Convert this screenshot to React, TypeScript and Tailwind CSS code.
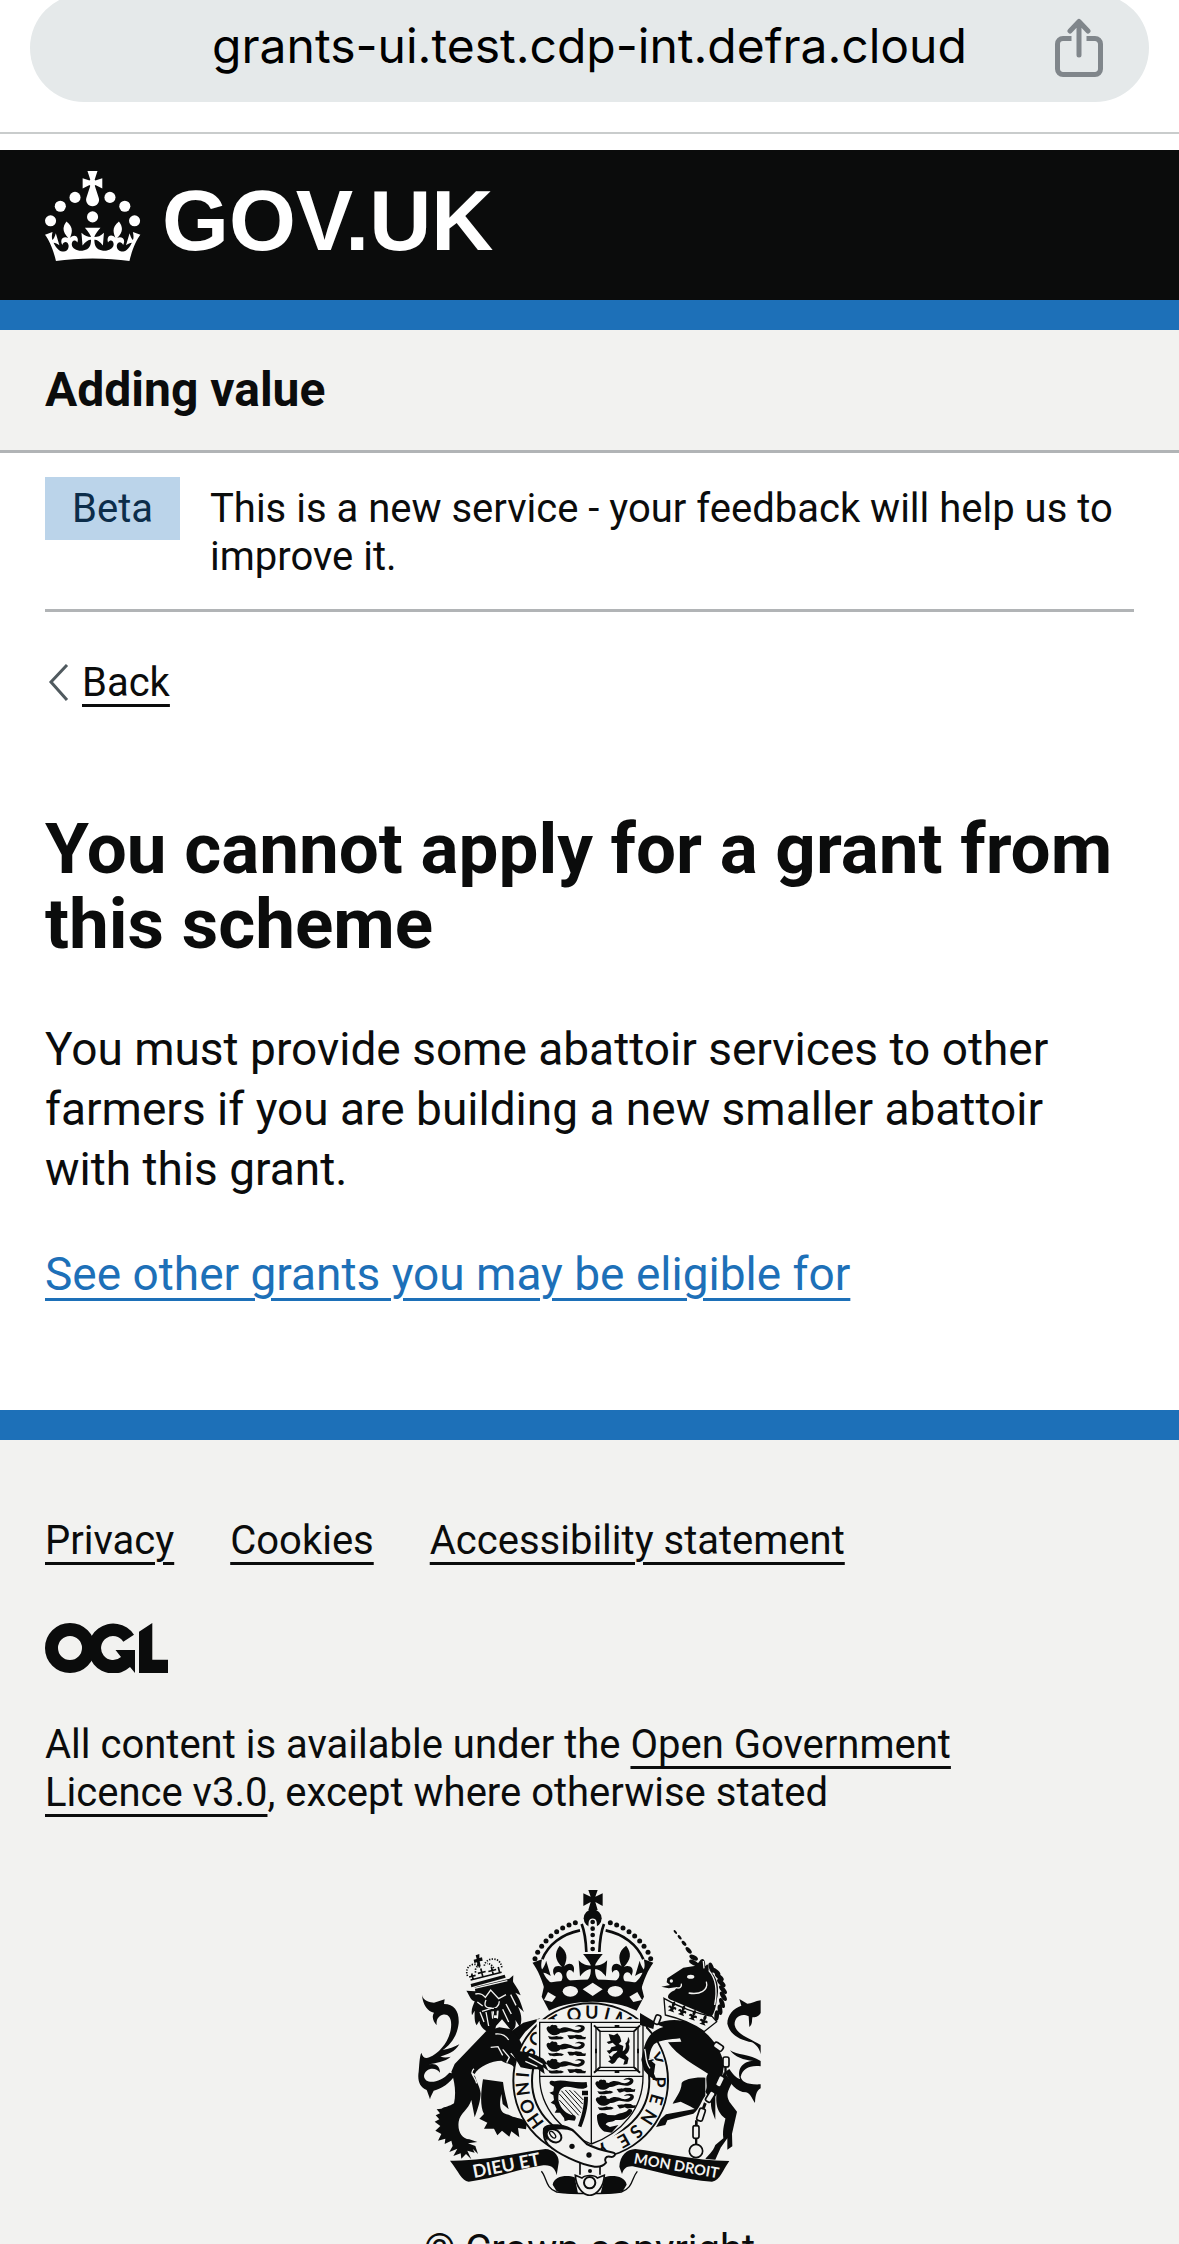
import React from "react";

const CROWN_BASE =
  "M37,37.9s-3.4,3.8-4.1,6.1c2.2,0,4.2-.5,6.4-2.8l-.7,8.5c-2-2.8-4.4-4.1-5.7-3.8.1,3.1.5,6.7,5.8,7.2,3.7.3,6.7-1.5,7-3.8.4-2.6-2-4.3-3.7-1.6-1.4-4.5,2.4-6.1,4.9-3.2-1.9-4.5-1.8-7.7,2.4-10.9,3,4,2.6,7.3-1.2,11.1,2.4-1.3,6.2,0,4,4.6-1.2-2.8-3.7-2.2-4.2.2-.3,1.7.7,3.7,3,4.2,1.9.3,4.7-.9,7-5.9-1.3,0-2.4.7-3.9,1.7l2.4-8c.6,2.3,1.4,3.7,2.2,4.5.6-1.6.5-2.8,0-5.3l5,1.8c-2.6,3.6-5.2,8.7-7.3,17.5-7.4-1.1-15.7-1.7-24.5-1.7h0c-8.8,0-17.1.6-24.5,1.7-2.1-8.8-4.7-13.9-7.3-17.5l5-1.8c-.5,2.5-.6,3.7,0,5.3.8-.8,1.6-2.3,2.2-4.5l2.4,8c-1.5-1-2.6-1.7-3.9-1.7,2.3,5,5.2,6.2,7,5.9,2.3-.4,3.3-2.4,3-4.2-.5-2.4-3-3.1-4.2-.2-2.2-4.6,1.6-6,4-4.6-3.7-3.7-4.2-7.1-1.2-11.1,4.2,3.2,4.3,6.4,2.4,10.9,2.5-2.8,6.3-1.3,4.9,3.2-1.8-2.7-4.1-1-3.7,1.6.3,2.3,3.3,4.1,7,3.8,5.4-.5,5.7-4.2,5.8-7.2-1.3-.2-3.7,1-5.7,3.8l-.7-8.5c2.2,2.3,4.2,2.7,6.4,2.8-.7-2.3-4.1-6.1-4.1-6.1h10.6Z";
const CROWN_TOP =
  "M33.1,9.8c.2-.1.3-.3.5-.5l4.6,2.4v-6.8l-4.6,1.5c-.1-.2-.3-.3-.5-.5l1.9-5.9h-6.7l1.9,5.9c-.2.1-.3.3-.5.5l-4.6-1.5v6.8l4.6-2.4c.1.2.3.3.5.5l-2.6,8c-.9,2.8,1.2,5.7,4.1,5.7h0c3,0,5.1-2.9,4.1-5.7l-2.6-8Z";

const CROWN_PEARLS = [
  [20, 17.6],
  [10.2, 23.5],
  [3.7, 33.2],
  [43.3, 17.6],
  [53.2, 23.5],
  [59.7, 33.2],
  [31.7, 30.6],
];

const BG = "#f2f2f0";
const INK = "#0b0c0c";

function Crown() {
  return (
    <svg viewBox="0 0 64 60" className="h-[90px] w-24 shrink-0 fill-current" aria-hidden="true">
      {CROWN_PEARLS.map(([x, y]) => (
        <circle key={`${x}-${y}`} cx={x} cy={y} r="3.7" />
      ))}
      <path d={CROWN_TOP} />
      <path d={CROWN_BASE} />
    </svg>
  );
}

function ShareIcon() {
  return (
    <svg viewBox="0 0 48 60" className="h-[60px] w-12" fill="none" stroke="#80868b" strokeWidth="5" aria-hidden="true">
      <path d="M16.500 20.500H8a5.500 5.500 0 0 0-5.500 5.500v25a5.500 5.500 0 0 0 5.500 5.500h32a5.500 5.500 0 0 0 5.500-5.500V26a5.500 5.500 0 0 0-5.500-5.500h-8.500" />
      <path d="M24 37V4M15 13l9-9.500 9 9.500" strokeLinecap="round" strokeLinejoin="round" />
    </svg>
  );
}

function OglLogo() {
  return (
    <svg viewBox="0 0 123 50" className="h-[50px] w-[123px]" role="img" aria-label="Open Government Licence">
      <circle cx="25" cy="25" r="18.500" fill="none" stroke={INK} strokeWidth="13" />
      <path fill={INK} d="M89 11.700A25 25 0 1 0 85 44L90 50V27H70.500L76 34A12 12 0 1 1 78.300 18.700Z" />
      <path fill={INK} d="M94 8.700 107.300 0V36.700H123V50H94Z" />
    </svg>
  );
}

// Motto letters with their bearing on the garter, in degrees clockwise from the bottom.
const GARTER: [string, number][] = [
  ["H", 54],
  ["O", 68],
  ["N", 83],
  ["I", 95],
  ["S", 115],
  ["O", 128],
  ["T", 149],
  ["Q", 166],
  ["U", 181],
  ["I", 194],
  ["M", 208],
  ["Y", 251],
  ["P", 271],
  ["E", 286],
  ["N", 302],
  ["S", 318],
  ["E", 331],
  ["Y", 350],
];

function PassantLion({ x, y }: { x: number; y: number }) {
  return (
    <g transform={`translate(${x} ${y})`}>
      <path d="M2 10C0 2 8-2 12 2c2-6 8-8 12-4 6-3 12 2 10 8l8 2c14-8 26-4 38 2 10 4 20 2 26-4-4-6-14-4-20-4 10-8 28-6 30 2 2 8-8 16-18 16-12 1-20-6-30-4-8 2-16 6-24 4l-6 4C22 32 8 26 2 10Z" />
      <path d="M6 30c10 4 18 2 26 0l8 2c6-2 10 2 14 4l-8 4c-12-2-22 4-36-2ZM64 28c10-2 18 2 26-2l16 2c2 4 8 6 14 4l-2 8H94l-8-4c-6 2-12 4-16 2Z" />
    </g>
  );
}

function Crest() {
  return (
    <svg viewBox="54 60 1029 918" className="h-[306px] w-[343px]" fill={INK} role="img" aria-label="Royal coat of arms">
      {/* Lion supporter */}
      <g transform="translate(36 210)">
        <path d="M30 165C33 183 55 188 66 188L98 178 96 192C128 192 142 215 140 250 136 290 112 318 92 330 110 328 128 320 142 313 130 335 105 345 85 349 95 354 106 353 116 350 100 366 70 368 48 374 70 368 84 378 84 398 70 378 38 385 36 408 38 435 85 430 112 398L132 402C112 432 90 445 65 452 62 460 55 470 54 478 50 465 46 455 44 450 22 442 16 420 20 395 22 380 22 350 28 338 32 352 40 358 52 352 80 340 108 310 116 270 122 235 110 220 92 224 78 228 72 240 74 256 64 245 58 230 66 218 48 215 32 195 30 165Z" />
        <path d="M300 272 334 248 385 235 340 275 318 305Z" />
        <path d="M222 274 128 372 118 395C130 430 132 462 126 490 112 500 98 500 88 506L74 508 84 520 71 526 82 538 68 545 85 558 70 572 88 582 78 602 100 596 98 612 118 602 122 618 112 636 136 626 124 648 146 640 148 656 162 642 178 658 166 632 188 638 182 626 198 642 190 618 168 610 196 606 172 598C150 596 136 575 140 545 144 520 170 508 178 480L188 532C198 505 206 480 206 460 204 440 192 425 188 402 198 380 240 362 268 362 282 372 300 370 306 382 322 372 330 390 348 384L372 386 386 408 392 384 412 400 404 372 418 374 396 350 362 336 334 322C322 296 312 282 298 268L262 262Z" />
        <path d="M213 418 273 426C276 455 284 480 290 508L272 492 268 462C260 500 264 522 290 524 306 534 326 532 345 545L342 568 318 564 322 592 298 574 292 590 270 572 256 586 246 566 216 566 226 548 202 536 216 522C204 500 206 460 213 418Z" />
        <path d="M163 152 190 154 188 142 292 116 304 106 303 124C306 134 316 140 326 166L310 158C326 180 328 196 336 216L318 200C330 225 330 240 324 262L310 240C314 258 308 268 298 272L270 238 252 258 246 284C222 276 204 262 202 242L194 256C186 244 188 226 188 212L180 226C176 208 184 196 188 184 174 180 172 164 163 152Z" />
        <path d="M176 132 278 104 281 113 178 142ZM191 46 202 42 202 54 210 52 212 62 203 64 206 78 197 80 195 67 187 69 185 59 194 57Z" />
        <g transform="rotate(-14 225 115)" fill="none" stroke={INK} strokeWidth="5">
          <path d="M184 90V108M174 98H194M214 82V106M202 94H226M246 84V106M234 96H258M266 90V106M176 108H272" />
          <path d="M170 94C166 60 206 56 212 78M276 94C280 56 232 54 226 78M196 90C196 80 202 74 208 72M252 90C248 78 244 74 236 72" strokeDasharray="4 4" />
        </g>
        <g fill="none" stroke={BG} strokeWidth="4">
          <path d="M184 146 286 122M190 162C205 158 215 166 220 172L236 150 260 176 282 164M222 180C215 196 220 204 236 204 250 208 262 198 262 184M196 186 212 198M210 214 236 206M240 214 242 236M282 192 298 222M296 164 312 196M272 208 290 246M258 212 256 236M204 216 216 246M222 216 230 258" />
          <path d="M250 282C265 280 280 284 290 300M236 322 258 320 272 346M272 328 292 352 284 368M296 340 316 358 308 376M332 360C350 366 360 362 372 374M350 348 388 372M366 342 404 366M186 386C170 400 190 410 194 430M178 398 198 412" />
        </g>
        <path d="M242 214h16v20h-12Z" fill={BG} />
        <path d="M246 204h8v22h-8Z" />
      </g>

      {/* Garter and motto */}
      <circle cx="572" cy="632" r="232" fill={BG} stroke={INK} strokeWidth="6" />
      <circle cx="572" cy="632" r="176" fill="none" stroke={INK} strokeWidth="6" />
      <g fontFamily="Lato, sans-serif" fontWeight="700" fontSize="54" textAnchor="middle">
        {GARTER.map(([letter, angle]) => (
          <text key={angle} x="572" y="446" transform={`rotate(${angle - 180} 572 632)`}>
            {letter}
          </text>
        ))}
      </g>

      {/* Shield */}
      <path
        d="M419 457H729V620C729 715 665 790 574 822 490 790 419 715 419 620Z"
        fill={BG}
        stroke={BG}
        strokeWidth="18"
      />
      <path
        d="M419 457H729V620C729 715 665 790 574 822 490 790 419 715 419 620ZM574 457V822M419 619H729"
        fill="none"
        stroke={INK}
        strokeWidth="4"
      />
      <PassantLion x={438} y={468} />
      <PassantLion x={438} y={518} />
      <PassantLion x={438} y={570} />
      <g transform="rotate(-4 640 690)">
        <PassantLion x={588} y={630} />
        <PassantLion x={586} y={678} />
        <path d="M588 732c8-8 24-8 32 2l22 2c16-8 28-4 38-12 4-6 16-4 14 4-14 22-34 26-52 22-12 8-26 0-30 12l12 8 26-4-22 22-22-6c-16-12-20-30-18-50Z" />
      </g>
      <g fill="none" stroke={INK} strokeWidth="4">
        <path d="M588 472H714V602H588ZM600 484H702V592H600Z" />
        <path
          d="M582 466l18 18M720 466l-18 18M582 608l18-16M720 608l-18-16M644 468h14M644 606h14M588 536v14M714 536v14"
          strokeWidth="6"
        />
      </g>
      <path d="M626 492l16 4 10-6 8 10 4 14-8 8 14 6-2 16c8-4 12-14 8-24 6-4 8-10 8-20 6 8 6 16 2 22 6 12 0 26-10 32l10 10-4 18-12 2 4-14-16-8c-10 4-8 18-22 20l-12-8 8-4-6-14 10 4c4-10 14-10 16-18l-14 2-10 8-8-10 10-2 4-8 14-4-10-10-12 4-6-6 12-4Z" />
      <path d="M560 636C520 640 486 626 464 634 452 628 444 636 452 644L462 650 460 664 448 668 460 676 462 690 452 698 464 704 470 718 464 728 480 728 492 744 494 754 506 750 524 752C530 744 528 736 520 736 500 734 482 716 476 694 472 670 480 650 500 650 520 650 550 664 562 650ZM546 662h18v14h-18ZM552 680h12c0 34-8 60-20 92l-10-4c10-30 18-54 18-88Z" />
      <g stroke={INK} strokeWidth="3">
        <path d="M484 662 542 728M496 660 546 716M508 660 548 702M522 662 550 690M478 672 536 736M478 690 524 740" />
      </g>

      {/* Crown */}
      <path d="M565 60h28l-7 20 22-10v38l-22-12 7 24h-28l7-24-22 12V70l22 10Z" />
      <circle cx="578" cy="145" r="27" />
      <path d="M566 156C568 142 588 142 590 156L596 244H560Z" fill={BG} />
      <g fill="none" stroke={INK} strokeWidth="8">
        <path d="M427 268C444 224 486 192 540 181M730 268C712 224 670 192 617 181" />
        <path d="M545 162C556 190 558 220 559 246M612 162C601 190 599 220 598 246" />
      </g>
      {[156, 176, 195, 216, 237].map((y) => (
        <circle key={y} cx="578" cy={y} r="7" />
      ))}
      {[
        [405, 266],
        [413, 247],
        [425, 229],
        [438, 213],
        [453, 198],
        [470, 185],
        [488, 174],
        [507, 165],
        [526, 158],
      ].map(([x, y]) => (
        <g key={x}>
          <circle cx={x} cy={y} r="7.500" />
          <circle cx={1157 - x} cy={y} r="7.500" />
        </g>
      ))}
      <g transform="translate(397.500 36) scale(5.700)">
        <path d={CROWN_BASE} />
      </g>
      <path d="M434 340C530 325 626 325 722 340L732 380 710 422C640 386 516 386 447 422L425 380Z" />
      <g fill={BG}>
        <path d="M578 338 608 358 578 378 548 358ZM444 366 468 380 456 396 432 390ZM712 366 688 380 700 396 726 390Z" />
        <ellipse cx="511" cy="364" rx="23" ry="16" />
        <ellipse cx="646" cy="364" rx="23" ry="16" />
      </g>

      {/* Lion paw over the shield */}
      <path d="M330 540 372 545 400 552 430 566 444 584 436 582 446 604 430 592 434 612 414 598 392 598 362 592Z" />
      <path d="M376 574 412 590M386 560 428 584" fill="none" stroke={BG} strokeWidth="4" />

      {/* Unicorn supporter */}
      <g transform="translate(720 165)">
        {[
          [106, 21, 7, 3],
          [119, 37, 8, 4],
          [132, 55, 9, 5],
          [146, 76, 12, 6],
          [161, 98, 14, 7],
          [162, 114, 16, 7],
        ].map(([x, y, rx, ry]) => (
          <ellipse key={y} cx={x} cy={y} rx={rx} ry={ry} transform={`rotate(${y > 90 ? 28 : 48} ${x} ${y})`} />
        ))}
        <path d="M0 264 44 290 40 312 0 300Z" />
        <path d="M82 160 130 128 168 122 182 104C192 98 196 108 196 124 206 110 206 128 206 134 232 152 240 190 230 226 228 248 222 266 214 276L96 226C78 222 80 206 104 196L112 186 86 190 64 185 90 180 80 172Z" />
        {[
          [214, 128, 70],
          [228, 140, 40],
          [238, 156, 40],
          [244, 174, 44],
          [249, 194, 50],
          [250, 214, 58],
          [246, 234, 70],
          [240, 254, 82],
          [230, 272, 94],
        ].map(([x, y, a]) => (
          <ellipse key={y} cx={x} cy={y} rx="16" ry="7" transform={`rotate(${a} ${x} ${y})`} />
        ))}
        <ellipse cx="152" cy="155" rx="11" ry="6" fill={BG} />
        <circle cx="94" cy="168" r="5" fill={BG} />
        <path
          d="M199 170C206 196 180 210 146 204M108 188C120 192 126 184 124 176M206 136C228 160 232 200 224 240M190 108 192 130"
          fill="none"
          stroke={BG}
          strokeWidth="4"
        />
        <path d="M46 296C96 276 150 282 190 318 222 344 246 380 252 420L246 460 236 500 214 530 196 500C206 480 192 462 204 446 170 424 110 392 84 352L124 350 120 340C90 344 60 344 42 358 30 372 28 396 28 402L46 418 42 446 52 470 28 454 12 436 4 404 10 376C18 345 30 318 70 306Z" />
        <path d="M252 440 276 474C262 500 258 510 268 530L291 560 276 626 277 664 262 674 262 640 242 668 226 704 196 702C204 690 218 682 226 660L250 640C246 610 256 590 256 580 240 568 224 550 230 500Z" />
        <path d="M226 500 226 584C216 560 210 545 214 520Z" />
        <path d="M196 458C160 456 132 464 125 474 124 500 106 520 98 536L122 530 150 544 164 552 78 568 62 582 48 606 76 600 82 586 160 566C180 550 182 530 196 512Z" />
        <path d="M362 226C346 228 334 236 322 236L298 222 304 242C280 250 262 270 262 296 270 330 300 345 336 352 350 360 358 370 362 388V360C330 340 290 330 284 300 282 276 305 262 326 274L328 306C340 296 334 284 338 276 350 280 358 270 362 264Z" />
        <path d="M270 376C290 390 330 388 362 408V424C330 420 308 430 302 456 306 470 320 480 362 478V490C352 496 346 506 345 534 334 518 330 504 318 502 290 500 270 480 256 440L268 432C284 456 296 462 300 462 290 430 310 408 340 408 310 404 286 398 270 376Z" />
        <path
          d="M72 220C112 244 170 266 216 274L230 290 192 320C150 290 110 278 76 270Z"
          fill={BG}
          stroke={INK}
          strokeWidth="4"
        />
        {[
          [98, 246],
          [128, 257],
          [160, 271],
          [192, 286],
        ].map(([x, y]) => (
          <path
            key={x}
            d="M0-18C6-12 6-6 2 0 8-4 14-2 12 6 10 4 6 4 4 8L10 14H-10L-4 8C-6 4-10 4-12 6-14-2-8-4-2 0-6-6-6-12 0-18Z"
            transform={`translate(${x} ${y}) rotate(20)`}
          />
        ))}
        <g fill={BG} stroke={INK} strokeWidth="5">
          <rect x="220" y="356" width="30" height="18" rx="6" transform="rotate(35 235 365)" />
          <rect x="249" y="396" width="18" height="30" rx="6" />
          <rect x="231" y="452" width="18" height="34" rx="6" transform="rotate(25 240 469)" />
          <rect x="202" y="498" width="18" height="34" rx="6" transform="rotate(32 211 515)" />
          <rect x="174" y="550" width="18" height="38" rx="6" transform="rotate(18 183 569)" />
          <rect x="159" y="602" width="18" height="38" rx="6" />
          <rect x="44" y="270" width="16" height="28" rx="6" transform="rotate(20 52 284)" />
          <circle cx="168" cy="678" r="20" />
        </g>
        <path d="M253 424h7v26h-7ZM222 484l8 4-6 12-8-4ZM192 532l8 4-6 16-8-4ZM165 586h8v18h-8ZM165 640h7v20h-7Z" />
        <path d="M14 372C20 392 14 410 30 430M26 404 40 400 48 410" fill="none" stroke={BG} strokeWidth="4" />
      </g>

      {/* Garter strap */}
      <path d="M536 872h68v42h-68Z" fill={BG} />
      <path d="M540 872V914M600 872V914" fill="none" stroke={INK} strokeWidth="5" />
      <path
        d="M432 776C440 760 500 762 524 786L560 822C590 838 612 842 640 848 652 852 640 864 630 860 616 858 612 868 618 878 610 888 600 892 584 890 540 884 470 850 444 824 432 810 430 790 432 776Z"
        fill={BG}
        stroke={INK}
        strokeWidth="6"
      />
      <path d="M436 772C460 762 500 764 520 784 496 776 470 776 448 784L442 812C430 800 430 784 436 772Z" />
      <ellipse cx="462" cy="797" rx="24" ry="18" fill={BG} stroke={INK} strokeWidth="6" transform="rotate(35 462 797)" />
      <ellipse cx="458" cy="794" rx="12" ry="6" fill={BG} stroke={INK} strokeWidth="4" transform="rotate(50 458 794)" />
      <circle cx="516" cy="829" r="8" />
      <circle cx="567" cy="855" r="8" />
      <circle cx="570" cy="903" r="6" />

      {/* Scroll */}
      <path d="M150 872C260 874 360 846 436 837 460 838 478 856 476 878L470 916C466 896 456 884 430 886 360 896 280 926 206 935 184 932 176 904 150 872Z" />
      <path d="M988 873C880 872 780 846 706 837 680 838 660 856 658 890L666 912C672 894 682 886 704 890 780 906 850 928 936 935 962 930 968 900 988 873Z" />
      <path
        d="M424 904C440 920 436 956 470 966 520 972 620 972 664 966 700 954 694 924 712 904"
        fill="none"
        stroke={INK}
        strokeWidth="4"
      />
      <path d="M458 944C462 918 500 914 524 922L534 970C500 972 486 968 470 964ZM680 944C676 918 636 914 614 922L602 970C640 972 652 968 668 964Z" />
      <path
        d="M526 916 546 924C556 914 584 914 592 924L613 916C612 950 590 976 569 976 548 976 528 950 526 916Z"
        fill={BG}
        stroke={INK}
        strokeWidth="5"
      />
      <circle cx="569" cy="938" r="17" fill={BG} stroke={INK} strokeWidth="6" />
      <g fill={BG} fontFamily="Lato, sans-serif" fontWeight="700">
        <text x="222" y="924" fontSize="54" transform="rotate(-11 222 924)">
          DIEU ET
        </text>
        <text x="700" y="880" fontSize="44" transform="rotate(10 700 880)">
          MON DROIT
        </text>
      </g>
    </svg>
  );
}

const LINK = "underline decoration-3 underline-offset-8";

export default function App() {
  return (
    <div className="min-h-screen overflow-hidden bg-white font-[Roboto,sans-serif] text-[#0b0c0c]">
      <div className="border-b-2 border-[#c9cccc] bg-white px-[30px] pb-[30px]">
        <div className="-mt-[6px] flex h-[108px] items-center rounded-full bg-[#e5e9ea] pr-[46px] pl-[94px]">
          <input
            type="text"
            readOnly
            aria-label="Address"
            value="grants-ui.test.cdp-int.defra.cloud"
            className="min-w-0 flex-1 bg-transparent pb-1 text-center font-[Inter,sans-serif] text-[48px] leading-[60px] text-black"
          />
          <button type="button" aria-label="Share">
            <ShareIcon />
          </button>
        </div>
      </div>

      <header className="mt-4">
        <div className="border-b-[30px] border-[#1d70b8] bg-[#0b0c0c] px-[45px] py-[21px]">
          <a href="#" aria-label="GOV.UK" className="flex h-[108px] items-start gap-[21px] text-white">
            <Crown />
            <span className="font-['Liberation_Sans',sans-serif] text-[86px] leading-[98px] font-bold">GOV.UK</span>
          </a>
        </div>
        <div className="border-b-3 border-[#b1b4b6] bg-[#f2f2f0] px-[45px] py-[30px]">
          <a href="#" className="block text-[48px] leading-[60px] font-bold">
            Adding value
          </a>
        </div>
      </header>

      <div className="px-[45px]">
        <div className="flex items-start gap-[30px] border-b-3 border-[#b1b4b6] pt-6 pb-7">
          <strong className="shrink-0 bg-[#bbd4ea] px-[27px] pt-2 pb-[7px] text-[40px] leading-[48px] font-normal text-[#0c2d4a]">
            Beta
          </strong>
          <p className="pt-2 text-[40px] leading-[48px]">
            This is a new service - your feedback will help us to improve it.
          </p>
        </div>

        <a href="#" className="mt-[47px] flex w-fit items-center gap-3 text-[40px] leading-[48px]">
          <svg viewBox="0 0 25 38" className="h-[38px] w-[25px]" fill="none" stroke="#505a5f" strokeWidth="3" aria-hidden="true">
            <path d="M22 1 6 18l16 18" />
          </svg>
          <span className={LINK}>Back</span>
        </a>

        <main className="pt-[104px] pb-[106px]">
          <h1 className="text-[71px] leading-[75px] font-bold">You cannot apply for a grant from this scheme</h1>
          <p className="mt-[58px] text-[46px] leading-[60px]">
            You must provide some abattoir services to other farmers if you are building a new smaller abattoir with
            this grant.
          </p>
          <p className="mt-[45px] text-[46px] leading-[60px]">
            <a href="#" className={`${LINK} text-[#1d70b8]`}>
              See other grants you may be eligible for
            </a>
          </p>
        </main>
      </div>

      <footer className="border-t-[30px] border-[#1d70b8] bg-[#f2f2f0] px-[45px] pt-[77px] pb-10 text-[40px] leading-[48px]">
        <ul className="flex flex-wrap gap-x-14">
          <li>
            <a href="#" className={LINK}>
              Privacy
            </a>
          </li>
          <li>
            <a href="#" className={LINK}>
              Cookies
            </a>
          </li>
          <li>
            <a href="#" className={LINK}>
              Accessibility statement
            </a>
          </li>
        </ul>
        <div className="mt-[58px]">
          <OglLogo />
        </div>
        <p className="mt-12 max-w-[1000px]">
          All content is available under the{" "}
          <a href="#" className={LINK}>
            Open Government Licence v3.0
          </a>
          , except where otherwise stated
        </p>
        <a href="#" className="mx-auto mt-[73px] flex w-fit flex-col items-center gap-[30px]">
          <Crest />
          <span>© Crown copyright</span>
        </a>
      </footer>
    </div>
  );
}
